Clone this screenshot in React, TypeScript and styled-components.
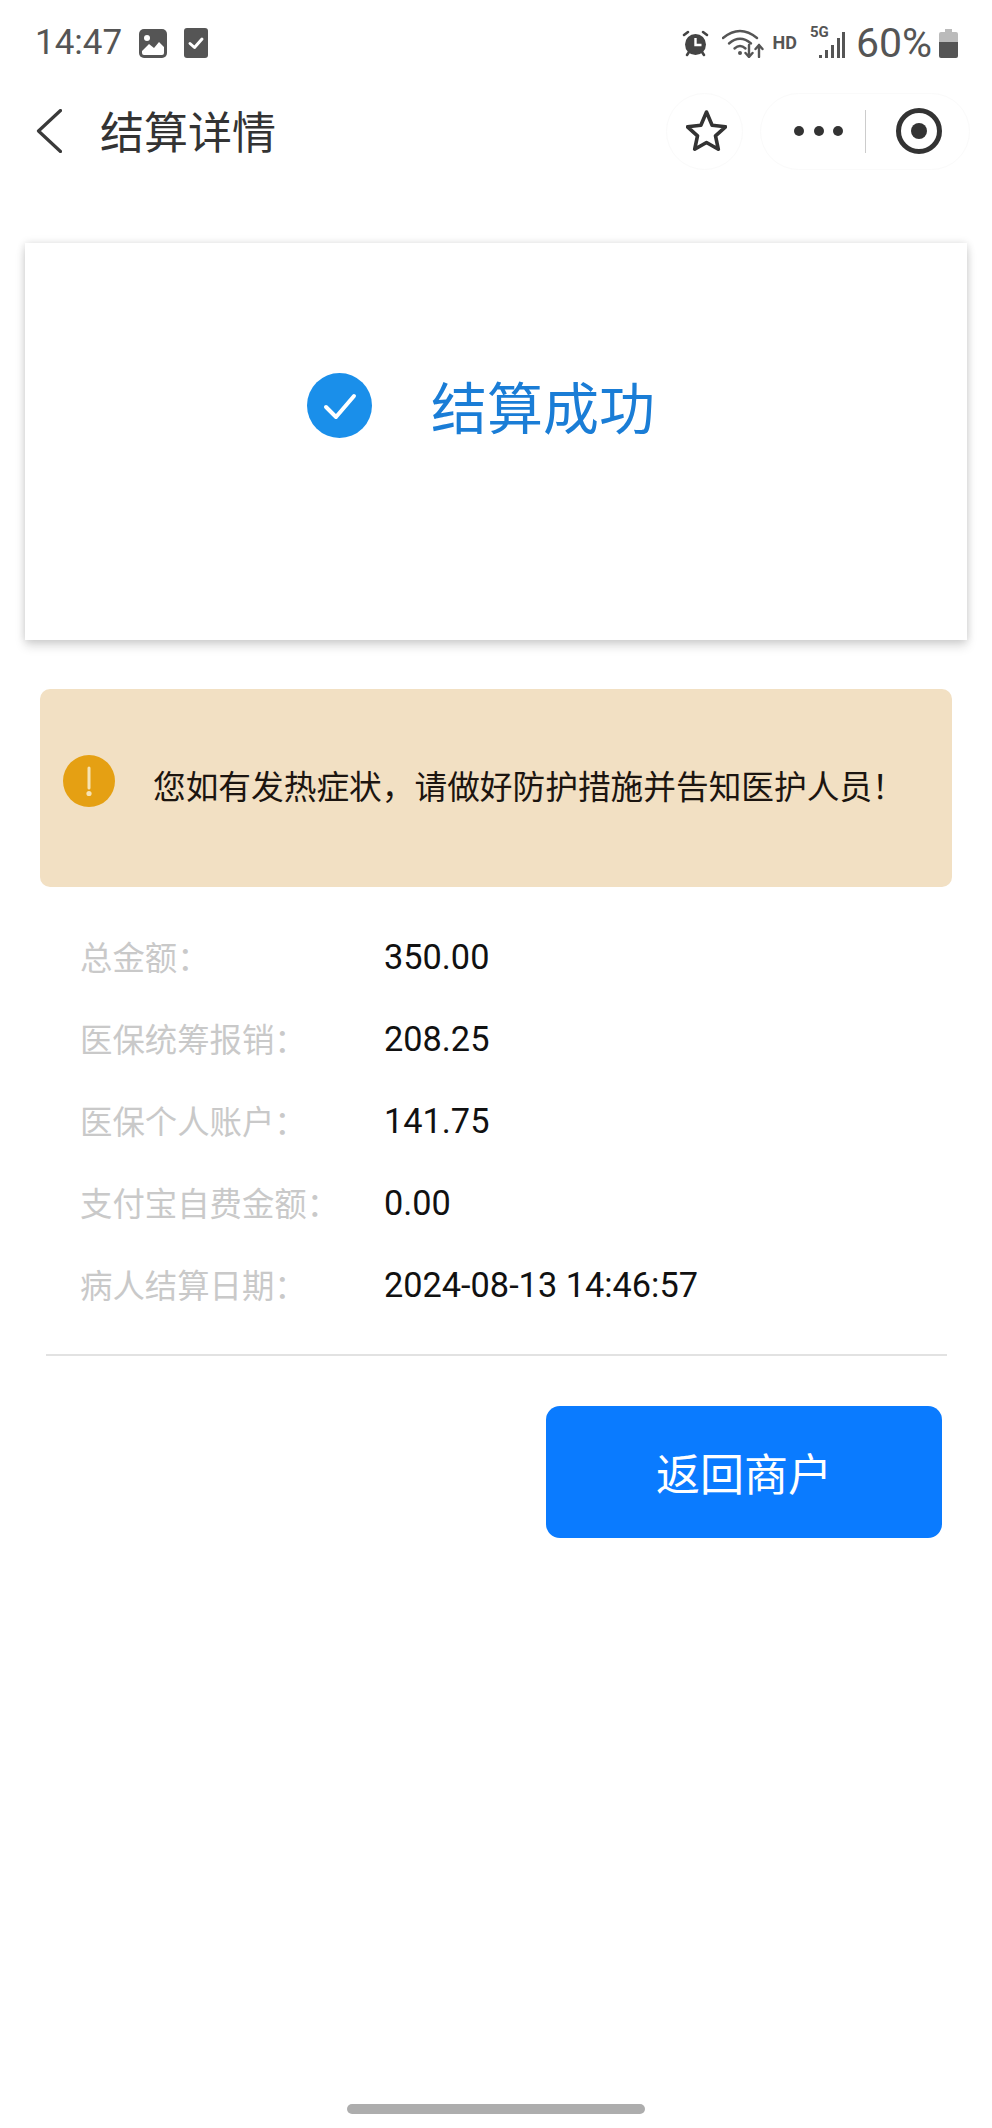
import React from "react";
import styled, { createGlobalStyle } from "styled-components";

const GlobalStyle = createGlobalStyle`
  html, body {
    margin: 0;
    padding: 0;
    background: #fff;
  }
  * {
    box-sizing: border-box;
  }
`;

const FONT = `Roboto, "Noto Sans CJK SC", sans-serif`;

const Page = styled.div`
  width: 992px;
  height: 2128px;
  display: flex;
  flex-direction: column;
  background: #fff;
  font-family: ${FONT};
  overflow: hidden;
`;

const StatusBar = styled.div`
  height: 86px;
  padding: 0 34px 0 35px;
  display: flex;
  align-items: center;
  justify-content: space-between;
  color: #555;
`;

const StatusGroup = styled.div`
  display: flex;
  align-items: center;
`;

const StatusText = styled.span<{ $left?: number; $size?: number }>`
  font-size: ${({ $size }) => $size ?? 35}px;
  line-height: 40px;
  color: #555;
  margin-left: ${({ $left }) => $left ?? 0}px;
`;

const StatusIcon = styled.svg<{ $left?: number }>`
  display: block;
  flex: none;
  margin-left: ${({ $left }) => $left ?? 0}px;
`;

const HdLabel = styled.span`
  margin-left: 8px;
  font-size: 18px;
  line-height: 18px;
  font-weight: 700;
  color: #555;
`;

const SignalWrap = styled.div`
  position: relative;
  width: 35px;
  height: 30px;
  margin-left: 13px;
`;

const NetworkLabel = styled.span`
  position: absolute;
  left: 0;
  top: -3px;
  font-size: 15px;
  line-height: 15px;
  font-weight: 700;
  color: #555;
`;

const NavBar = styled.div`
  height: 90px;
  padding: 0 22px 0 36px;
  display: flex;
  align-items: center;
`;

const NavTitle = styled.h1`
  margin: 5px 0 0 38px;
  font-size: 44px;
  line-height: 60px;
  font-weight: 400;
  color: #333;
  flex: 1;
`;

const RoundButton = styled.div`
  width: 77px;
  height: 77px;
  padding-left: 3px;
  border: 1px solid #fafafa;
  border-radius: 50%;
  display: flex;
  align-items: center;
  justify-content: center;
  margin-right: 17px;
`;

const Capsule = styled.div`
  width: 210px;
  height: 77px;
  border: 1px solid #fafafa;
  border-radius: 39px;
  padding-left: 33px;
  display: flex;
  align-items: center;
`;

const Dots = styled.div`
  display: flex;
  gap: 9.5px;
`;

const Dot = styled.span`
  width: 10px;
  height: 10px;
  border-radius: 50%;
  background: #333;
`;

const CapsuleDivider = styled.span`
  width: 1px;
  height: 43px;
  margin: 0 29px 0 22px;
  background: #ccc;
`;

const ResultCard = styled.section`
  margin: 67px 0 0 25px;
  width: 942px;
  height: 397px;
  padding: 0 0 73px 282px;
  display: flex;
  align-items: center;
  gap: 59px;
  background: #fff;
  box-shadow: 0 0 8px rgba(0, 0, 0, 0.12), 0 6px 10px rgba(0, 0, 0, 0.14);
`;

const ResultTitle = styled.h2`
  margin: 10px 0 0;
  font-size: 56px;
  line-height: 70px;
  font-weight: 400;
  color: #1a7dd6;
`;

const Notice = styled.div`
  margin: 49px 0 0 40px;
  width: 912px;
  height: 198px;
  padding: 0 0 0 23px;
  display: flex;
  align-items: center;
  gap: 38px;
  background: #f2e0c3;
  border-radius: 10px;
`;

const NoticeIcon = styled.svg`
  display: block;
  flex: none;
  margin-bottom: 14px;
`;

const NoticeText = styled.p`
  margin: 0;
  font-size: 32.7px;
  line-height: 44px;
  color: #1c1510;
  white-space: nowrap;
`;

const Details = styled.dl`
  margin: 29px 0 0;
  padding: 0 0 0 80px;
`;

const DetailRow = styled.div`
  height: 82px;
  display: flex;
  align-items: center;
`;

const DetailLabel = styled.dt`
  width: 304px;
  padding-bottom: 4px;
  font-size: 32.4px;
  color: #c9c9c9;
  white-space: nowrap;
`;

const DetailValue = styled.dd`
  margin: 0;
  font-size: 34.3px;
  color: #111;
`;

const Rule = styled.hr`
  margin: 28px 45px 0 46px;
  height: 2px;
  border: 0;
  background: #e2e2e2;
`;

const ActionRow = styled.div`
  margin-top: 50px;
  padding-right: 50px;
  display: flex;
  justify-content: flex-end;
`;

const ReturnButton = styled.button`
  width: 396px;
  height: 132px;
  border: 0;
  border-radius: 14px;
  background: #0a7bff;
  color: #fff;
  font-family: ${FONT};
  font-size: 44px;
`;

const HomeBar = styled.div`
  margin: auto 0 14px 347px;
  width: 298px;
  height: 10px;
  border-radius: 5px;
  background: #adadad;
`;

const rows = [
  { label: "总金额：", value: "350.00" },
  { label: "医保统筹报销：", value: "208.25" },
  { label: "医保个人账户：", value: "141.75" },
  { label: "支付宝自费金额：", value: "0.00" },
  { label: "病人结算日期：", value: "2024-08-13 14:46:57" },
];

export default function App() {
  return (
    <Page>
      <GlobalStyle />
      <StatusBar>
        <StatusGroup>
          <StatusText>14:47</StatusText>
          <StatusIcon $left={17} width="28" height="29" viewBox="0 0 28 29">
            <rect width="28" height="29" rx="5" fill="#555" />
            <path d="M3 22l7-7 5 4 5-6 5 5v6a2 2 0 0 1-2 2H5a2 2 0 0 1-2-2z" fill="#fff" />
            <circle cx="8" cy="9" r="3" fill="#fff" />
          </StatusIcon>
          <StatusIcon $left={17} width="24" height="30" viewBox="0 0 24 30">
            <rect width="24" height="30" rx="3" fill="#555" />
            <path d="M6 15.5l4.5 4L18 11" fill="none" stroke="#fff" strokeWidth="3" strokeLinecap="round" strokeLinejoin="round" />
          </StatusIcon>
        </StatusGroup>
        <StatusGroup>
          <StatusIcon width="27" height="27" viewBox="0 0 27 27">
            <circle cx="13.5" cy="14.5" r="10.5" fill="#444" />
            <path d="M13.5 8v7h6" fill="none" stroke="#fff" strokeWidth="2.4" />
            <path d="M2 5l4-3M25 5l-4-3M5 25l2-3M22 25l-2-3" fill="none" stroke="#444" strokeWidth="2.6" strokeLinecap="round" />
          </StatusIcon>
          <StatusIcon $left={13} width="42" height="30" viewBox="0 0 42 30">
            <g fill="none" stroke="#555" strokeWidth="2.4" strokeLinecap="round" strokeLinejoin="round">
              <path d="M1 10Q18-4 35 10" />
              <path d="M7 15.5Q18 6 29 15.5" />
              <path d="M12.5 20.5Q18 15.5 23.5 20.5" />
              <path d="M27 17v12M23.5 25l3.5 4 3.500-4" />
              <path d="M37 29V17M33.500 21l3.500-4 3.500 4" />
            </g>
            <circle cx="18" cy="25" r="2" fill="#555" />
          </StatusIcon>
          <HdLabel>HD</HdLabel>
          <SignalWrap>
            <NetworkLabel>5G</NetworkLabel>
            <StatusIcon width="35" height="30" viewBox="0 0 35 30">
              <path d="M9 27h3v3H9zM15 22h3v8h-3zM21 17h3v13h-3zM27 10h3v20h-3zM32 4h3v26h-3z" fill="#555" />
            </StatusIcon>
          </SignalWrap>
          <StatusText $left={11} $size={41}>60%</StatusText>
          <StatusIcon $left={7} width="19" height="29" viewBox="0 0 19 29">
            <path d="M6 0h7v3h4a2 2 0 0 1 2 2v8H0V5a2 2 0 0 1 2-2h4z" fill="#bbb" />
            <path d="M0 13h19v14a2 2 0 0 1-2 2H2a2 2 0 0 1-2-2z" fill="#555" />
          </StatusIcon>
        </StatusGroup>
      </StatusBar>

      <NavBar>
        <svg width="26" height="44" viewBox="0 0 26 44">
          <path d="M24.500 1.500L2.500 22l22 20.500" fill="none" stroke="#3a3a3a" strokeWidth="3.200" strokeLinecap="round" strokeLinejoin="round" />
        </svg>
        <NavTitle>结算详情</NavTitle>
        <RoundButton>
          <svg width="41" height="44" viewBox="0 0 41 44">
            <path
              d="M20.500 3L26.100 16.300 39.500 17.800 29.500 26.900 32.300 40.200 20.500 33.500 8.700 40.200 11.500 26.900 1.500 17.800 14.900 16.300Z"
              fill="none"
              stroke="#333"
              strokeWidth="3.600"
              strokeLinejoin="round"
            />
          </svg>
        </RoundButton>
        <Capsule>
          <Dots>
            <Dot />
            <Dot />
            <Dot />
          </Dots>
          <CapsuleDivider />
          <svg width="48" height="48" viewBox="0 0 48 48">
            <circle cx="24" cy="24" r="20.500" fill="none" stroke="#333" strokeWidth="5" />
            <circle cx="24" cy="24" r="8" fill="#333" />
          </svg>
        </Capsule>
      </NavBar>

      <ResultCard>
        <svg width="65" height="65" viewBox="0 0 65 65">
          <circle cx="32.500" cy="32.500" r="32.500" fill="#1a8fea" />
          <path d="M19 34l10 10 18-21" fill="none" stroke="#fff" strokeWidth="4" strokeLinecap="round" strokeLinejoin="round" />
        </svg>
        <ResultTitle>结算成功</ResultTitle>
      </ResultCard>

      <Notice>
        <NoticeIcon width="52" height="52" viewBox="0 0 52 52">
          <circle cx="26" cy="26" r="26" fill="#e5a013" />
          <path d="M26 13v20" stroke="#f6e3b4" strokeWidth="3" strokeLinecap="round" />
          <circle cx="26" cy="38.500" r="2.600" fill="#f6e3b4" />
        </NoticeIcon>
        <NoticeText>您如有发热症状，请做好防护措施并告知医护人员！</NoticeText>
      </Notice>

      <Details>
        {rows.map((row) => (
          <DetailRow key={row.label}>
            <DetailLabel>{row.label}</DetailLabel>
            <DetailValue>{row.value}</DetailValue>
          </DetailRow>
        ))}
      </Details>

      <Rule />

      <ActionRow>
        <ReturnButton>返回商户</ReturnButton>
      </ActionRow>

      <HomeBar />
    </Page>
  );
}
